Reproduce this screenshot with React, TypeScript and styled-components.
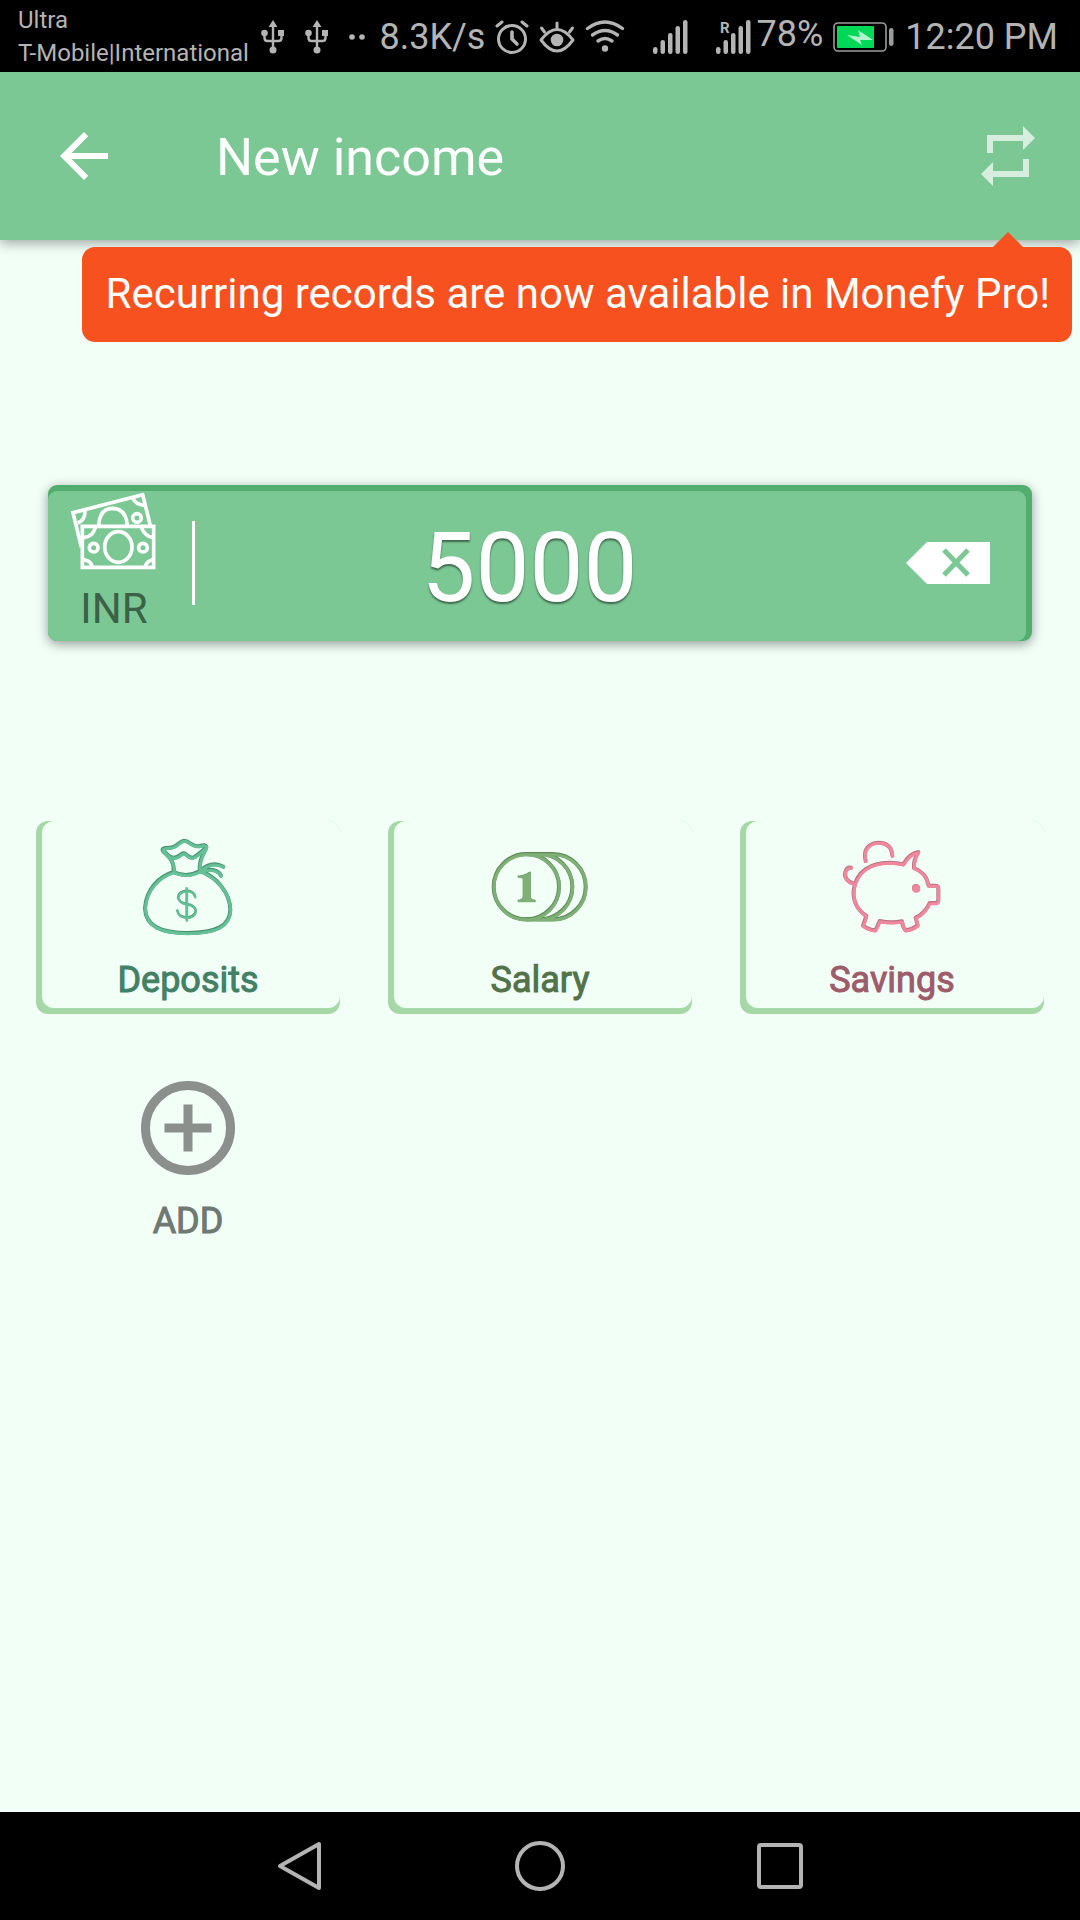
import React from "react";
import styled, { createGlobalStyle } from "styled-components";

const colors = {
  page: "#f1fff7",
  green: "#7bc894",
  greenDark: "#51ae6e",
  cardEdge: "#a5d7a7",
  orange: "#f6511e",
  status: "#b4b4b4",
};

const GlobalStyle = createGlobalStyle`
  * { box-sizing: border-box; }
  body { margin: 0; background: ${colors.page}; font-family: Roboto, "Liberation Sans", sans-serif; }
  button { margin: 0; padding: 0; border: 0; background: none; font: inherit; color: inherit; cursor: pointer; }
  svg { display: block; flex: none; overflow: visible; }
`;

const Screen = styled.div`
  display: flex;
  flex-direction: column;
  min-height: 100vh;
`;

const StatusBar = styled.div`
  display: flex;
  align-items: center;
  height: 72px;
  padding: 2px 22px 0 18px;
  background: #000;
  color: ${colors.status};
  font-size: 36px;
  line-height: 42px;
  white-space: nowrap;
`;

const Carriers = styled.div`
  display: flex;
  flex-direction: column;
  font-size: 24px;
  line-height: 33px;
`;

const StatusGroup = styled.div<{ $gap: number }>`
  display: flex;
  align-items: center;
  gap: ${(p) => p.$gap}px;
`;

const Notifications = styled(StatusGroup)`
  margin-left: 12px;
`;

const SystemStatus = styled(StatusGroup)`
  margin-left: auto;
`;

const Signals = styled(StatusGroup)`
  margin-left: 18px;
`;

const Percent = styled.span`
  padding-bottom: 6px;
`;

const Header = styled.header`
  position: relative;
  display: flex;
  align-items: center;
  height: 168px;
  padding: 0 36px 0 48px;
  background: ${colors.green};
  color: #fff;
  box-shadow: 0 3px 12px rgba(0, 0, 0, 0.36);
`;

const IconButton = styled.button<{ $faded?: boolean }>`
  opacity: ${(p) => (p.$faded ? 0.7 : 1)};
`;

const Title = styled.h1`
  flex: 1;
  margin: 0 0 0 96px;
  padding-top: 4px;
  font-size: 52px;
  line-height: 60px;
  font-weight: 400;
`;

const Tooltip = styled.div`
  position: absolute;
  top: 175px;
  right: 8px;
  padding: 22px 22px 23px 24px;
  border-radius: 13px;
  background: ${colors.orange};
  font-size: 42px;
  line-height: 50px;
  white-space: nowrap;

  &::before {
    content: "";
    position: absolute;
    right: 49px;
    bottom: 100%;
    border: 15px solid transparent;
    border-top-width: 0;
    border-bottom-color: ${colors.orange};
  }
`;

const Main = styled.main`
  flex: 1;
  padding: 245px 36px 48px;
`;

const AmountBox = styled.div`
  margin: 0 12px 180px;
  padding: 6px 6px 0 0;
  border-radius: 9px;
  background: ${colors.greenDark};
  box-shadow: 0 3px 12px rgba(0, 0, 0, 0.4);
`;

const AmountInner = styled.div`
  display: flex;
  align-items: center;
  height: 150px;
  padding: 0 36px 0 20px;
  border-radius: 9px;
  background: ${colors.green};
`;

const Currency = styled.button`
  display: flex;
  flex-direction: column;
  align-items: center;
  gap: 14px;
  width: 92px;
  padding-bottom: 6px;
  color: #3b6147;
  font-size: 42px;
  line-height: 50px;
`;

const Divider = styled.div`
  width: 3px;
  height: 84px;
  margin: 0 0 6px 32px;
  background: #fff;
`;

const AmountInput = styled.input`
  flex: 1;
  min-width: 0;
  height: 116px;
  margin: 0 42px 0 0;
  padding: 4px 0 0;
  border: 0;
  outline: 0;
  background: none;
  color: #fff;
  font-family: inherit;
  font-size: 96px;
  line-height: 112px;
  text-align: center;
  text-shadow: 0 2px 2px rgba(0, 0, 0, 0.5);
`;

const Erase = styled.button`
  margin-bottom: 6px;
`;

const Grid = styled.div`
  display: grid;
  grid-template-columns: repeat(3, 1fr);
  gap: 48px;
`;

const Card = styled.button<{ $tint: string; $plain?: boolean }>`
  padding: 0 0 6px 6px;
  border-radius: 12px;
  background: ${(p) => (p.$plain ? "none" : colors.cardEdge)};
  color: ${(p) => p.$tint};
`;

const CardFace = styled.span`
  display: flex;
  flex-direction: column;
  align-items: center;
  gap: 21px;
  padding: 16px 6px 6px 0;
  border-radius: 12px;
  background: ${colors.page};
`;

const Label = styled.span`
  font-size: 36px;
  line-height: 44px;
  -webkit-text-stroke: 1px currentColor;
`;

const NavBar = styled.nav`
  display: flex;
  justify-content: center;
  gap: 190px;
  align-items: center;
  height: 108px;
  background: #000;
`;

const Usb = () => (
  <svg width="24" height="34" viewBox="0 0 24 34" fill="none" stroke={colors.status} strokeWidth="2.400">
    <path d="M12 5v26M3.500 13v5q0 3 3 3h11q3 0 3-3v-5" />
    <path d="M12 0l4.500 7h-9zM17 10h6v6h-6z" fill={colors.status} stroke="none" />
    <circle cx="3.500" cy="13" r="3.300" fill={colors.status} stroke="none" />
    <circle cx="12" cy="30" r="3.500" fill={colors.status} stroke="none" />
  </svg>
);

const Dots = () => (
  <svg width="16" height="8" viewBox="0 0 16 8" fill={colors.status}>
    <circle cx="3" cy="4" r="2.800" />
    <circle cx="13" cy="4" r="2.800" />
  </svg>
);

const Alarm = () => (
  <svg width="34" height="34" viewBox="0 0 34 34" fill="none" stroke={colors.status} strokeWidth="3">
    <circle cx="17" cy="19" r="13.500" />
    <path d="M17 12v7l5 5" strokeWidth="3.600" strokeLinecap="round" strokeLinejoin="round" />
    <path d="M2 6l5-4M32 6l-5-4" strokeLinecap="round" />
  </svg>
);

const Eye = () => (
  <svg width="36" height="34" viewBox="0 0 36 34" fill="none" stroke={colors.status} strokeWidth="3" strokeLinecap="round">
    <path d="M2 20q16-21 32 0q-16 22-32 0z" strokeLinejoin="round" />
    <circle cx="18" cy="20" r="6.300" fill={colors.status} stroke="none" />
    <path d="M18 3v6M2.500 8l3 4M33.500 8l-3 4" />
  </svg>
);

const Wifi = () => (
  <svg width="40" height="34" viewBox="0 0 40 34" fill="none" stroke={colors.status} strokeWidth="3.400" strokeLinecap="round">
    <path d="M2.500 8.500q17.500-13 35 0M7.500 15q12.500-9 25 0M13 21q7-5 14 0" />
    <circle cx="20" cy="28.500" r="3.200" fill={colors.status} stroke="none" />
  </svg>
);

const Signal = ({ roaming = false }: { roaming?: boolean }) => (
  <svg width="36" height="34" viewBox="0 0 36 34" fill={colors.status} fontFamily="Roboto, sans-serif">
    <rect x="0" y="27" width="4.500" height="7" rx="2.200" />
    <rect x="7.500" y="20" width="4.500" height="14" rx="2.200" />
    <rect x="15" y="13" width="4.500" height="21" rx="2.200" />
    <rect x="22.500" y="6" width="4.500" height="28" rx="2.200" />
    <rect x="30" y="0" width="4.500" height="34" rx="2.200" />
    {roaming && (
      <text x="4" y="13" fontSize="15" fontWeight="700">R</text>
    )}
  </svg>
);

const Battery = () => (
  <svg width="62" height="30" viewBox="0 0 62 30" fill="none">
    <rect x="1" y="1" width="52" height="28" rx="4" stroke="#9c9c9c" strokeWidth="1.600" />
    <rect x="4" y="4" width="37" height="22" rx="1" fill="#00d957" />
    <path d="M14 13l13 2-2-7 15 10-13 0 2 5z" fill="#b3f4cd" />
    <rect x="56" y="6" width="4.500" height="18" rx="2.200" fill="#9c9c9c" />
  </svg>
);

const Money = () => (
  <svg width="86" height="78" viewBox="120 65 258 234" fill="none" stroke="#fff" strokeWidth="11">
    <path d="M151 230L126 127L335 73L358 166" />
    <path d="M203 166Q206 114 245 114Q286 116 289 166" />
    <circle cx="318" cy="143" r="13" />
    <path d="M162 121Q163 148 140 158M305 82Q313 104 343 105" />
    <path d="M154 168H368V291H154Z" />
    <ellipse cx="262" cy="230" rx="41" ry="46" />
    <circle cx="188" cy="232" r="13" />
    <circle cx="336" cy="232" r="13" />
    <path d="M193 172Q185 199 158 202M331 172Q343 198 366 202M158 268Q181 272 184 290M366 268Q347 272 342 290" />
  </svg>
);

const EraseIcon = () => (
  <svg width="84" height="42" viewBox="0 0 84 42">
    <path d="M0 21L21 0H84V42H21Z" fill="#fff" />
    <path d="M38 8L62 33M62 8L38 33" stroke={colors.green} strokeWidth="5" />
  </svg>
);

/* Each line is drawn twice, so its upper left edge looks pressed in. */
const Engraved = ({ box, dark, light, children }: { box: string; dark: string; light: string; children: React.ReactNode }) => (
  <svg width="100" height="100" viewBox={box} fill="none" strokeLinejoin="round" strokeLinecap="round">
    <g stroke={dark} color={dark} strokeWidth="12">{children}</g>
    <g stroke={light} color={light} strokeWidth="9" transform="translate(1 2)">{children}</g>
  </svg>
);

const MoneyBag = () => (
  <Engraved box="354 111 300 300" dark="#4b9273" light="#64c096">
    <path d="M461 216C464 178 442 168 428 152Q426 143 448 143C470 144 478 122 493 122C508 122 515 142 540 138Q557 132 559 141C556 156 534 176 540 213" />
    <path d="M430 150Q448 174 462 173Q475 172 482 164Q491 156 500 165Q514 178 525 170Q546 155 557 144" />
    <path d="M461 216Q500 235 540 213C590 230 631 280 631 330C629 378 590 398 504 399C420 398 377 378 375 325C378 270 415 230 461 216" />
    <path d="M540 213Q575 181 610 200M545 213Q590 201 603 227" />
    <path d="M525 290Q522 273 501 272Q475 274 474 292Q477 308 500 312Q526 316 527 333Q523 351 500 352Q474 350 472 331M500 265V360" strokeWidth="7" />
  </Engraved>
);

const Coins = () => (
  <Engraved box="360 111 300 300" dark="#5f8c57" light="#7fb077">
    <circle cx="469" cy="260" r="98" />
    <path d="M509 162A98 98 0 0 1 509 358M549 162A98 98 0 0 1 549 358M469 162H549M469 358H549" strokeLinecap="butt" />
    <path d="M443 227Q465 225 478 215H482V290Q483 299 496 299V305H443V299Q457 299 458 290V236Q455 231 443 232Z" fill="currentColor" stroke="none" />
  </Engraved>
);

const Pig = () => (
  <Engraved box="336 111 300 300" dark="#bd7583" light="#f0879f">
    <path d="M407 183C398 150 415 129 445 128C475 129 486 145 487 167" />
    <path d="M363 203C346 201 340 225 350 238Q358 248 372 251" />
    <path d="M520 193Q538 160 565 156Q550 180 552 204Q589 218 596 257H615Q625 257 625 266V300Q625 309 615 309H599Q585 340 557 353L563 376Q548 388 527 391Q517 380 516 364Q482 370 449 363Q442 380 436 391Q416 390 399 377L409 348C380 328 368 305 371 270C379 212 425 187 480 188Q502 188 520 193Z" />
    <circle cx="558" cy="264" r="12" fill="currentColor" stroke="none" />
  </Engraved>
);

const AddIcon = () => (
  <svg width="100" height="100" viewBox="0 0 100 100" fill="none" stroke="#8b908c" strokeWidth="9">
    <circle cx="50" cy="50" r="42.500" />
    <path d="M50 26.500V73.500M26.500 50H73.500" />
  </svg>
);

const categories = [
  { name: "Deposits", tint: "#438066", icon: <MoneyBag /> },
  { name: "Salary", tint: "#527349", icon: <Coins /> },
  { name: "Savings", tint: "#9e5c6a", icon: <Pig /> },
];

export default function App() {
  return (
    <Screen>
      <GlobalStyle />
      <StatusBar>
        <Carriers>
          <span>Ultra</span>
          <span>T-Mobile|International</span>
        </Carriers>
        <Notifications $gap={20}>
          <Usb />
          <Usb />
          <Dots />
        </Notifications>
        <SystemStatus $gap={10}>
          <span>8.3K/s</span>
          <Alarm />
          <Eye />
          <Wifi />
          <Signals $gap={27}>
            <Signal />
            <StatusGroup $gap={4}>
              <Signal roaming />
              <Percent>78%</Percent>
            </StatusGroup>
          </Signals>
          <Battery />
          <span>12:20 PM</span>
        </SystemStatus>
      </StatusBar>

      <Header>
        <IconButton aria-label="Back">
          <svg width="72" height="72" viewBox="0 0 24 24" fill="#fff">
            <path d="M20 11H7.830l5.590-5.590L12 4l-8 8 8 8 1.410-1.410L7.830 13H20v-2z" />
          </svg>
        </IconButton>
        <Title>New income</Title>
        <IconButton aria-label="Repeat" $faded>
          <svg width="72" height="72" viewBox="0 0 24 24" fill="#fff">
            <path d="M7 7h10v3l4-4-4-4v3H5v6h2V7zm10 10H7v-3l-4 4 4 4v-3h12v-6h-2v4z" />
          </svg>
        </IconButton>
        <Tooltip role="tooltip">Recurring records are now available in Monefy Pro!</Tooltip>
      </Header>

      <Main>
        <AmountBox>
          <AmountInner>
            <Currency>
              <Money />
              INR
            </Currency>
            <Divider />
            <AmountInput aria-label="Amount" inputMode="decimal" defaultValue="5000" />
            <Erase aria-label="Delete digit">
              <EraseIcon />
            </Erase>
          </AmountInner>
        </AmountBox>

        <Grid>
          {categories.map((c) => (
            <Card key={c.name} $tint={c.tint}>
              <CardFace>
                {c.icon}
                <Label>{c.name}</Label>
              </CardFace>
            </Card>
          ))}
          <Card $tint="#6f7872" $plain>
            <CardFace>
              <AddIcon />
              <Label>ADD</Label>
            </CardFace>
          </Card>
        </Grid>
      </Main>

      <NavBar>
        <IconButton aria-label="Back">
          <svg width="50" height="50" viewBox="0 0 50 50" fill="none" stroke={colors.status} strokeWidth="4" strokeLinejoin="round">
            <path d="M44 3V47L5 25Z" />
          </svg>
        </IconButton>
        <IconButton aria-label="Home">
          <svg width="50" height="50" viewBox="0 0 50 50" fill="none" stroke={colors.status} strokeWidth="4">
            <circle cx="25" cy="25" r="23" />
          </svg>
        </IconButton>
        <IconButton aria-label="Recent apps">
          <svg width="50" height="50" viewBox="0 0 50 50" fill="none" stroke={colors.status} strokeWidth="4">
            <rect x="4" y="4" width="42" height="42" rx="2" />
          </svg>
        </IconButton>
      </NavBar>
    </Screen>
  );
}
